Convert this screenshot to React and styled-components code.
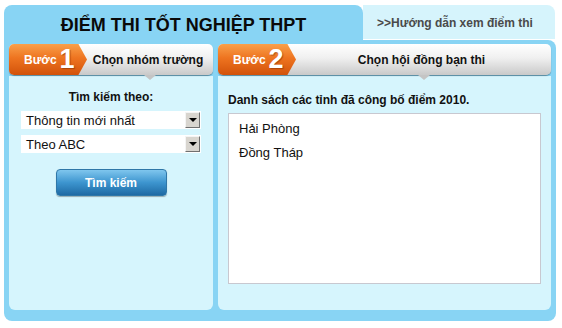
import styled, { createGlobalStyle } from "styled-components";

const GlobalStyle = createGlobalStyle`
  html, body {
    margin: 0;
    padding: 0;
    background: #ffffff;
    font-family: "Liberation Sans", Arial, sans-serif;
  }
`;

export default function App() {
  return (
    <>
      <GlobalStyle />
      <Frame>
        <TopRow>
          <TitleTab>ĐIỂM THI TỐT NGHIỆP THPT</TitleTab>
          <GuideTab>&gt;&gt;Hướng dẫn xem điểm thi</GuideTab>
        </TopRow>
        <Body>
          <Panel $width={204}>
            <StepHeader>
              <Badge>
                <span>Bước</span>
                <b>1</b>
              </Badge>
              <StepTitle>Chọn nhóm trường</StepTitle>
            </StepHeader>
            <PanelBody $center>
              <Label>Tìm kiếm theo:</Label>
              <SelectBox>
                <span>Thông tin mới nhất</span>
                <Arrow />
              </SelectBox>
              <SelectBox>
                <span>Theo ABC</span>
                <Arrow />
              </SelectBox>
              <SearchButton>Tìm kiếm</SearchButton>
            </PanelBody>
          </Panel>
          <Panel $width={333}>
            <StepHeader>
              <Badge>
                <span>Bước</span>
                <b>2</b>
              </Badge>
              <StepTitle>Chọn hội đồng bạn thi</StepTitle>
            </StepHeader>
            <PanelBody>
              <ListLabel>Danh sách các tỉnh đã công bố điểm 2010.</ListLabel>
              <ListBox>
                <li>Hải Phòng</li>
                <li>Đồng Tháp</li>
              </ListBox>
            </PanelBody>
          </Panel>
        </Body>
      </Frame>
    </>
  );
}

const Frame = styled.div`
  width: 552px;
  margin: 5px 0 0 4px;
`;

const TopRow = styled.div`
  display: flex;
  height: 35px;
`;

const TitleTab = styled.div`
  width: 359px;
  background: #88d4f4;
  border-radius: 8px 8px 0 0;
  display: flex;
  align-items: center;
  justify-content: center;
  padding-top: 5px;
  box-sizing: border-box;
  font-size: 18px;
  font-weight: bold;
  color: #0a0a0a;
`;

const GuideTab = styled.div`
  flex: 1;
  margin-right: 1px;
  height: 33px;
  background: #d6f4fc;
  border-radius: 0 8px 0 0;
  display: flex;
  align-items: center;
  justify-content: center;
  font-size: 12px;
  font-weight: bold;
  color: #4a4a4a;
  padding-right: 8px;
  padding-top: 1px;
`;

const Body = styled.div`
  display: flex;
  gap: 5px;
  padding: 4px 5px 11px;
  background: #88d4f4;
  border-radius: 0 8px 8px 8px;
`;

const Panel = styled.div`
  width: ${(p) => p.$width}px;
  display: flex;
  flex-direction: column;
`;

const StepHeader = styled.div`
  display: flex;
  height: 31px;
  border-radius: 5px;
  background: linear-gradient(#ffffff, #f0f0f0 45%, #c9c9c9);
  box-shadow: 0 1px 1px rgba(0, 0, 0, 0.35);
  position: relative;
  z-index: 1;
`;

const Badge = styled.div`
  width: 78px;
  display: flex;
  align-items: center;
  padding-left: 15px;
  box-sizing: border-box;
  background: linear-gradient(#f9a04a, #ee7420 45%, #d2520a);
  border-radius: 5px 0 0 5px;
  clip-path: polygon(0 0, 89% 0, 100% 50%, 89% 100%, 0 100%);
  color: #fff;

  span {
    font-size: 12px;
    font-weight: bold;
  }
  b {
    font-size: 27px;
    line-height: 1;
    margin-left: 3px;
    text-shadow: 1px 1px 1px rgba(120, 40, 0, 0.5);
  }
`;

const StepTitle = styled.div`
  position: relative;
  flex: 1;
  display: flex;
  align-items: center;
  justify-content: center;
  font-size: 12px;
  font-weight: bold;
  color: #111;
  padding-right: 4px;

  &::after {
    content: "";
    position: absolute;
    left: 50%;
    bottom: -5px;
    margin-left: -6px;
    border-left: 6px solid transparent;
    border-right: 6px solid transparent;
    border-top: 5px solid #c4c4c4;
  }
`;

const PanelBody = styled.div`
  height: 234px;
  background: #d6f5fd;
  border-radius: 0 0 6px 6px;
  margin-top: 1px;
  padding: ${(p) => (p.$center ? "14px 12px 0" : "17px 10px 0")};
  display: flex;
  flex-direction: column;
  box-sizing: border-box;
`;

const Label = styled.div`
  text-align: center;
  font-size: 12px;
  font-weight: bold;
  color: #111;
  margin-bottom: 7px;
`;

const SelectBox = styled.div`
  display: flex;
  align-items: center;
  height: 18px;
  background: #fff;
  margin-bottom: 6px;
  font-size: 13px;
  color: #111;

  span {
    flex: 1;
    padding-left: 5px;
  }
`;

const Arrow = styled.i`
  width: 15px;
  height: 16px;
  margin-right: 1px;
  background: #d8d5cf;
  border-top: 1px solid #f4f4f4;
  border-left: 1px solid #f4f4f4;
  border-right: 1px solid #707070;
  border-bottom: 1px solid #707070;
  box-sizing: border-box;
  display: flex;
  align-items: center;
  justify-content: center;

  &::before {
    content: "";
    border-left: 4px solid transparent;
    border-right: 4px solid transparent;
    border-top: 4px solid #000;
  }
`;

const SearchButton = styled.button`
  align-self: center;
  margin-top: 10px;
  width: 111px;
  height: 27px;
  border: 1px solid #2f77a8;
  border-radius: 4px;
  background: linear-gradient(#7fc6ee, #3d95cf 50%, #1e6aa4);
  box-shadow: 0 1px 1px rgba(0, 0, 0, 0.3);
  color: #fff;
  font-family: inherit;
  font-size: 12px;
  font-weight: bold;
`;

const ListLabel = styled.div`
  font-size: 12px;
  font-weight: bold;
  color: #111;
  margin-bottom: 6px;
`;

const ListBox = styled.ul`
  list-style: none;
  margin: 0;
  padding: 6px 10px;
  height: 171px;
  box-sizing: border-box;
  background: #fff;
  border: 1px solid #c8c8d0;
  font-size: 13px;
  color: #111;

  li {
    height: 24px;
    line-height: 18px;
  }
`;
